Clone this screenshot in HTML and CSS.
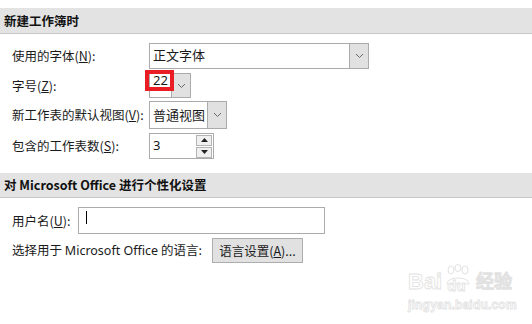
FILE: index.html
```html
<!DOCTYPE html>
<html lang="zh-CN">
<head>
    <meta charset="UTF-8">
    <title>Excel 选项 - 常规</title>
    <link rel="stylesheet" href="styles.css">
</head>
<body>
    <div class="options">
        <div class="section-head">新建工作簿时</div>
        <div class="rows">
            <div class="row row-font">
                <span class="label">使用的字体(<u>N</u>):</span>
                <div class="select font-select">
                    <span class="value">正文字体</span>
                    <span class="drop"><svg width="9" height="6" viewBox="0 0 9 6"><path d="M1 1 L4.5 4.5 L8 1" fill="none" stroke="#6a6a6a" stroke-width="1"/></svg></span>
                </div>
            </div>
            <div class="row row-size">
                <span class="label">字号(<u>Z</u>):</span>
                <div class="select size-select">
                    <span class="value">22</span>
                    <span class="drop"><svg width="9" height="6" viewBox="0 0 9 6"><path d="M1 1 L4.5 4.5 L8 1" fill="none" stroke="#6a6a6a" stroke-width="1"/></svg></span>
                    <span class="mark"></span>
                </div>
            </div>
            <div class="row row-view">
                <span class="label">新工作表的默认视图(<u>V</u>):</span>
                <div class="select view-select">
                    <span class="value">普通视图</span>
                    <span class="drop"><svg width="9" height="6" viewBox="0 0 9 6"><path d="M1 1 L4.5 4.5 L8 1" fill="none" stroke="#6a6a6a" stroke-width="1"/></svg></span>
                </div>
            </div>
            <div class="row row-count">
                <span class="label">包含的工作表数(<u>S</u>):</span>
                <div class="spinner">
                    <span class="value">3</span>
                    <span class="spin-btns">
                        <span class="spin up"><svg width="7" height="4" viewBox="0 0 7 4"><path d="M0 4 L3.5 0 L7 4 Z" fill="#222"/></svg></span>
                        <span class="spin down"><svg width="7" height="4" viewBox="0 0 7 4"><path d="M0 0 L3.5 4 L7 0 Z" fill="#222"/></svg></span>
                    </span>
                </div>
            </div>
        </div>

        <div class="section-head second">对 Microsoft Office 进行个性化设置</div>
        <div class="rows personal">
            <div class="row row-user">
                <span class="label short">用户名(<u>U</u>):</span>
                <div class="text-input"><span class="caret"></span></div>
            </div>
            <div class="row row-lang">
                <span class="label auto">选择用于 <span class="latin">Microsoft Office</span> 的语言:</span>
                <button class="btn">语言设置(<u>A</u>)...</button>
            </div>
        </div>
    </div>

    <div class="watermark">
        <div class="wm-logo">
            <span>Bai</span>
            <span class="wm-paw">
                <svg width="30" height="22" viewBox="0 0 30 22">
                    <ellipse cx="8" cy="6" rx="3" ry="4" fill="none" stroke="#e2e2e2"/>
                    <ellipse cx="15" cy="4" rx="3" ry="3.5" fill="none" stroke="#e2e2e2"/>
                    <ellipse cx="22" cy="6" rx="3" ry="4" fill="none" stroke="#e2e2e2"/>
                    <path d="M4 20 C4 12 26 12 26 20 Z" fill="none" stroke="#e2e2e2"/>
                </svg>
                <span class="wm-du">du</span>
            </span>
            <span class="wm-cn">经验</span>
        </div>
        <div class="wm-url">jingyan.baidu.com</div>
    </div>
</body>
</html>
```

FILE: styles.css
```css
* {
    margin: 0;
    padding: 0;
    box-sizing: border-box;
}
body {
    width: 532px;
    height: 324px;
    background: #fff;
    font-family: "Noto Sans CJK SC", sans-serif;
    font-size: 12.5px;
    color: #1a1a1a;
    position: relative;
    overflow: hidden;
}
u {
    text-decoration: underline;
    text-underline-offset: 1px;
}
.latin {
    font-family: "Noto Sans", sans-serif;
}
.options {
    padding-top: 8px;
}
.section-head {
    height: 26px;
    background: #e3e3e3;
    border-bottom: 1px solid #c6c6c6;
    padding-left: 4px;
    font-weight: bold;
    font-size: 12.5px;
    line-height: 25px;
    color: #111;
}
.section-head.second {
    margin-top: 14px;
    height: 25px;
    line-height: 24px;
}
.rows {
    padding: 9px 0 0 12px;
    display: flex;
    flex-direction: column;
}
.row {
    display: flex;
    align-items: center;
}
.row-size { margin-top: 4px; }
.row-view { margin-top: 3px; }
.row-count { margin-top: 4px; }
.row-lang { margin-top: 4px; }

.label {
    width: 137px;
    flex-shrink: 0;
    line-height: 18px;
    white-space: nowrap;
}
.label.short {
    width: 66px;
}
.label.auto {
    width: 200px;
}
.select, .spinner, .text-input {
    display: flex;
    border: 1px solid #ababab;
    background: #fff;
    position: relative;
}
.value {
    flex: 1;
    padding-left: 3px;
    line-height: 22px;
    font-size: 13px;
    white-space: nowrap;
}
.drop {
    width: 19px;
    flex-shrink: 0;
    background: #e1e1e1;
    border-left: 1px solid #ababab;
    display: flex;
    align-items: center;
    justify-content: center;
}
.font-select {
    width: 220px;
    height: 26px;
}
.size-select {
    width: 42px;
    height: 25px;
}
.size-select .value {
    font-family: "Noto Sans", sans-serif;
    line-height: 13px;
    padding-left: 3px;
}
.view-select {
    width: 78px;
    height: 28px;
}
.view-select .value {
    line-height: 25px;
}
.mark {
    position: absolute;
    left: -5px;
    top: -4px;
    width: 29px;
    height: 21px;
    border: 4px solid #ea1c24;
}
.spinner {
    width: 65px;
    height: 26px;
}
.spinner .value {
    font-family: "Noto Sans", sans-serif;
}
.spin-btns {
    width: 17px;
    flex-shrink: 0;
    display: flex;
    flex-direction: column;
    justify-content: center;
    gap: 1px;
    padding-right: 1px;
}
.spin {
    height: 11px;
    background: #f0f0f0;
    border: 1px solid #b4b4b4;
    display: flex;
    align-items: center;
    justify-content: center;
}
.text-input {
    width: 247px;
    height: 27px;
    align-items: center;
    padding-left: 7px;
}
.caret {
    width: 1px;
    height: 13px;
    background: #000;
    margin-top: -6px;
}
.btn {
    width: 91px;
    height: 25px;
    background: #e1e1e1;
    border: 1px solid #adadad;
    font-family: "Noto Sans CJK SC", sans-serif;
    font-size: 12.5px;
    color: #1a1a1a;
}
.watermark {
    position: absolute;
    left: 408px;
    top: 264px;
    color: #fff;
    -webkit-text-stroke: 0.8px #e2e2e2;
}
.wm-logo {
    display: flex;
    align-items: flex-end;
    height: 30px;
    font-family: "Liberation Sans", sans-serif;
    font-weight: bold;
    font-size: 22px;
    line-height: 24px;
}
.wm-paw {
    position: relative;
    width: 30px;
    height: 30px;
    margin-left: 1px;
}
.wm-paw svg {
    position: absolute;
    left: 0;
    top: 0;
}
.wm-du {
    position: absolute;
    left: 4px;
    bottom: 0;
    font-size: 15px;
    line-height: 16px;
}
.wm-cn {
    font-size: 18px;
    margin-left: 3px;
}
.wm-url {
    font-family: "Liberation Sans", sans-serif;
    font-weight: bold;
    font-size: 12px;
    line-height: 14px;
    margin-top: 4px;
    letter-spacing: 0.2px;
}
```
